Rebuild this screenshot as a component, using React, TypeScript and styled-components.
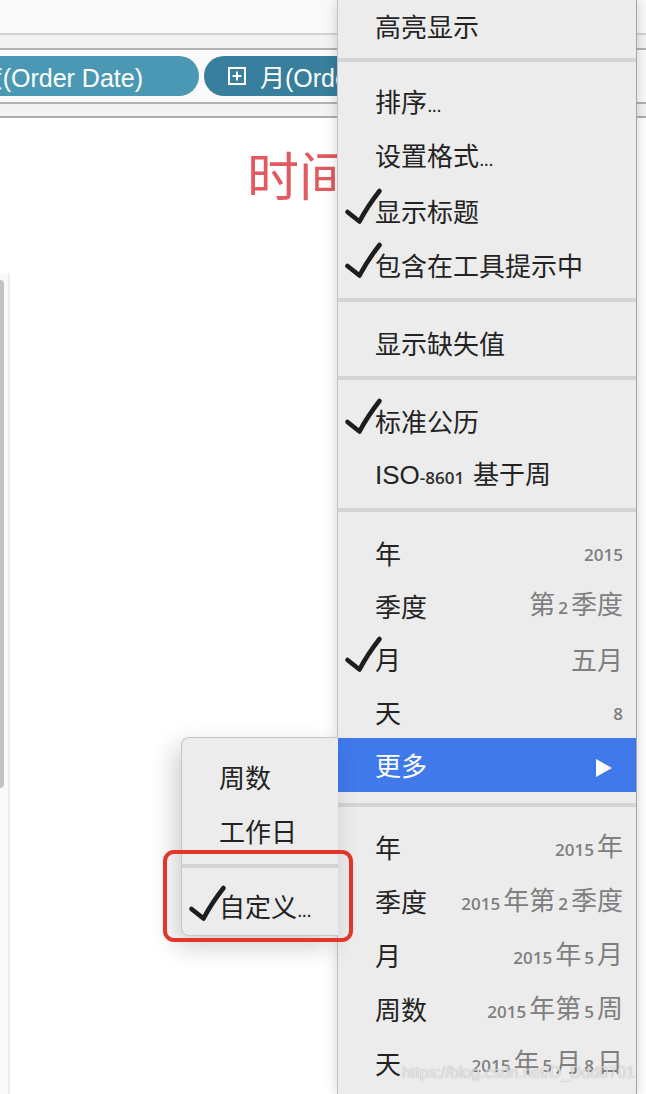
import React from "react";
import styled, { createGlobalStyle } from "styled-components";

const CJK = `"Noto Sans CJK SC", "Noto Sans", sans-serif`;

const GlobalStyle = createGlobalStyle`
  * { box-sizing: border-box; }
  html, body { margin: 0; padding: 0; }
  body { background: #ffffff; font-family: ${CJK}; }
`;

const Screen = styled.div`
  position: relative;
  width: 646px;
  height: 1094px;
  overflow: hidden;
  background: #ffffff;
`;

const Sheet = styled.div`
  display: flex;
  flex-direction: column;
  height: 100%;
`;

const TopBar = styled.div`
  height: 35px;
  background: #f9f9f9;
  border-bottom: 2px solid #d3d3d3;
`;

const Band = styled.div<{ $h: number; $line: string }>`
  height: ${(p) => p.$h + 2}px;
  background: #f3f3f3;
  border-bottom: 2px solid ${(p) => p.$line};
`;

const ShelfRow = styled.div`
  height: 54px;
  padding-top: 6px;
  display: flex;
  gap: 5px;
  background: #fafafa;
  border-bottom: 2px solid #b1b1b1;
`;

const Pill = styled.div<{ $tone: "light" | "dark"; $w: number }>`
  width: ${(p) => p.$w}px;
  height: 40px;
  flex-shrink: 0;
  display: flex;
  align-items: center;
  overflow: hidden;
  white-space: nowrap;
  border-radius: 20px;
  background: ${(p) => (p.$tone === "light" ? "#4a98b3" : "#377f9c")};
  color: #ffffff;
  font-family: "Liberation Sans", ${CJK};
  font-size: 25px;
`;

const CutPill = styled(Pill)`
  justify-content: flex-end;
  padding-right: 56px;
  border-radius: 0 20px 20px 0;
`;

const OpenPill = styled(Pill)`
  padding-left: 24px;
  gap: 14px;
`;

const Canvas = styled.div`
  flex: 1;
  display: flex;
  background: #ffffff;
`;

const Gutter = styled.div`
  width: 10px;
  flex-shrink: 0;
  display: flex;
  flex-direction: column;
  padding-top: 155px;
`;

const Track = styled.div`
  flex: 1;
  padding-top: 7px;
  background: #fafafa;
  border-right: 2px solid #ececec;
`;

const Thumb = styled.div`
  width: 4px;
  height: 508px;
  background: #c2c2c2;
  border-radius: 0 4px 4px 0;
`;

const Chart = styled.div`
  flex: 1;
  padding: 30px 0 0 237px;
`;

const Title = styled.div`
  font-family: ${CJK};
  font-size: 52px;
  line-height: 1;
  color: #e05a5f;
  white-space: nowrap;
`;

const MainMenu = styled.div`
  position: absolute;
  left: 337px;
  top: 0;
  width: 300px;
  height: 1094px;
  display: flex;
  flex-direction: column;
  background: #ececec;
  border-left: 1px solid #c4c4c4;
  border-right: 1px solid #a6a6a6;
  box-shadow: 0 0 12px rgba(0, 0, 0, 0.18);
  z-index: 1;
`;

const SubMenu = styled.div`
  position: absolute;
  left: 181px;
  top: 737px;
  width: 157px;
  height: 199px;
  display: flex;
  flex-direction: column;
  padding-top: 12px;
  background: #ececec;
  border: 1px solid #c6c6c6;
  border-right: none;
  border-radius: 8px 0 0 8px;
  box-shadow: -6px 10px 26px rgba(0, 0, 0, 0.2);
  z-index: 2;
`;

const Row = styled.div<{ $h?: number; $active?: boolean }>`
  height: ${(p) => p.$h ?? 54}px;
  flex-shrink: 0;
  display: flex;
  align-items: center;
  padding: 0 13px 0 7px;
  font-family: ${CJK};
  font-size: 26px;
  color: ${(p) => (p.$active ? "#ffffff" : "#232323")};
  background: ${(p) => (p.$active ? "#3f79ea" : "transparent")};
  white-space: nowrap;
`;

const Separator = styled.div<{ $h?: number; $top?: number }>`
  height: ${(p) => p.$h ?? 24}px;
  flex-shrink: 0;
  &::before {
    content: "";
    display: block;
    height: 4px;
    margin-top: ${(p) => p.$top ?? 6}px;
    background: #d4d4d4;
  }
`;

const MarkSlot = styled.span`
  width: 30px;
  height: 44px;
  flex-shrink: 0;
  display: flex;
  align-items: center;
  overflow: visible;
`;

const CheckSvg = styled.svg`
  display: block;
  flex-shrink: 0;
  overflow: visible;
`;

const Label = styled.span`
  flex: 1;
  display: block;
  line-height: 36px;
`;

const Value = styled.span`
  display: block;
  line-height: 36px;
  color: #7f7f7f;
`;

const Num = styled.span<{ $dark?: boolean; $edge?: "start" | "end" }>`
  font-family: "Open Sans", "DejaVu Sans", sans-serif;
  font-weight: 600;
  font-size: 17px;
  margin-left: ${(p) => (p.$edge === "start" ? 0 : 3)}px;
  margin-right: ${(p) => (p.$edge === "end" ? 0 : 3)}px;
  color: ${(p) => (p.$dark ? "#2e2e2e" : "inherit")};
`;

const Latin = styled.span`
  font-family: "Liberation Sans", sans-serif;
`;

const Dots = styled.span`
  font-family: "Liberation Sans", sans-serif;
  font-size: 20px;
  letter-spacing: -1px;
`;

const ArrowSvg = styled.svg`
  flex-shrink: 0;
  margin: 6px 11px 0 0;
`;

const Callout = styled.div`
  position: absolute;
  left: 163px;
  top: 850px;
  width: 190px;
  height: 92px;
  border: 4px solid #e4352b;
  border-radius: 11px;
  z-index: 3;
`;

const Watermark = styled.div`
  position: absolute;
  right: 11px;
  top: 1064px;
  font-family: "Liberation Sans", sans-serif;
  font-size: 16px;
  color: rgba(255, 255, 255, 0.75);
  text-shadow: 0 0 1px rgba(0, 0, 0, 0.4);
  white-space: nowrap;
  z-index: 4;
`;

function Check() {
  return (
    <CheckSvg width={36} height={44} viewBox="0 0 36 44">
      <path
        d="M2.5 23 L14.5 32.5 Q22 18 34.5 2"
        fill="none"
        stroke="#1d1d1d"
        strokeWidth={4.6}
        strokeLinecap="round"
        strokeLinejoin="round"
      />
    </CheckSvg>
  );
}

function PlusBox() {
  return (
    <svg width={18} height={18} viewBox="0 0 18 18">
      <rect x={1} y={1} width={16} height={16} fill="none" stroke="#fff" strokeWidth={2} />
      <path d="M9 4.5 V13.5 M4.5 9 H13.5" stroke="#fff" strokeWidth={2} />
    </svg>
  );
}

function Item({
  label,
  value,
  checked,
  h,
  active,
  arrow,
}: {
  label: React.ReactNode;
  value?: React.ReactNode;
  checked?: boolean;
  h?: number;
  active?: boolean;
  arrow?: boolean;
}) {
  return (
    <Row $h={h} $active={active}>
      <MarkSlot>{checked && <Check />}</MarkSlot>
      <Label>{label}</Label>
      {value && <Value>{value}</Value>}
      {arrow && (
        <ArrowSvg width={16} height={18} viewBox="0 0 16 18">
          <polygon points="0,0 16,9 0,18" fill="#ffffff" />
        </ArrowSvg>
      )}
    </Row>
  );
}

export default function App() {
  return (
    <>
      <GlobalStyle />
      <Screen>
        <Sheet>
          <TopBar />
          <Band $h={13} $line="#b3b3b3" />
          <ShelfRow>
            <CutPill $tone="light" $w={199}>
              季度(Order Date)
            </CutPill>
            <OpenPill $tone="dark" $w={300}>
              <PlusBox />
              月(Order Date)
            </OpenPill>
          </ShelfRow>
          <Band $h={12} $line="#adadad" />
          <Canvas>
            <Gutter>
              <Track>
                <Thumb />
              </Track>
            </Gutter>
            <Chart>
              <Title>时间</Title>
            </Chart>
          </Canvas>
        </Sheet>

        <MainMenu>
          <Item label="高亮显示" h={52} />
          <Separator />
          <Item label={<>排序<Dots>...</Dots></>} />
          <Item label={<>设置格式<Dots>...</Dots></>} />
          <Item label="显示标题" checked />
          <Item label="包含在工具提示中" checked />
          <Separator />
          <Item label="显示缺失值" />
          <Separator />
          <Item label="标准公历" checked />
          <Item
            label={
              <>
                <Latin>ISO</Latin>
                <Num $dark $edge="start">-8601</Num> 基于周
              </>
            }
          />
          <Separator />
          <Item label="年" h={53} value={<Num $edge="end">2015</Num>} />
          <Item
            label="季度"
            h={53}
            value={
              <>
                第<Num>2</Num>季度
              </>
            }
          />
          <Item label="月" h={53} checked value="五月" />
          <Item label="天" h={53} value={<Num $edge="end">8</Num>} />
          <Item label="更多" active arrow />
          <Separator $h={28} $top={11} />
          <Item
            label="年"
            value={
              <>
                <Num $edge="start">2015</Num>年
              </>
            }
          />
          <Item
            label="季度"
            value={
              <>
                <Num $edge="start">2015</Num>年第<Num>2</Num>季度
              </>
            }
          />
          <Item
            label="月"
            value={
              <>
                <Num $edge="start">2015</Num>年<Num>5</Num>月
              </>
            }
          />
          <Item
            label="周数"
            value={
              <>
                <Num $edge="start">2015</Num>年第<Num>5</Num>周
              </>
            }
          />
          <Item
            label="天"
            value={
              <>
                <Num $edge="start">2015</Num>年<Num>5</Num>月<Num>8</Num>日
              </>
            }
          />
        </MainMenu>

        <SubMenu>
          <Item label="周数" />
          <Item label="工作日" />
          <Separator $h={23} />
          <Item label={<>自定义<Dots>...</Dots></>} checked />
        </SubMenu>

        <Callout />
        <Watermark>https://blog.csdn.net/D_Ddd0701</Watermark>
      </Screen>
    </>
  );
}
